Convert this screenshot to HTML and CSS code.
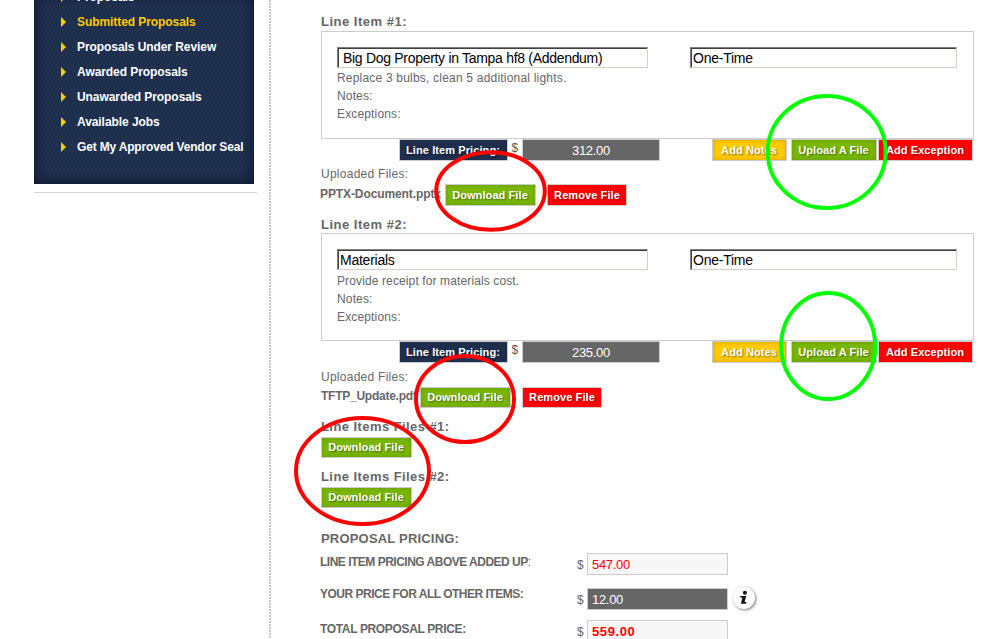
FILE: index.html
```
<!DOCTYPE html>
<html lang="en">
<head>
<meta charset="utf-8">
<title>Submitted Proposals</title>
<link rel="stylesheet" href="styles.css">
</head>
<body>
<div class="page">
  <aside class="side">
    <nav class="menu">
      <ul class="menu-list">
        <li>Proposals</li>
        <li class="active">Submitted Proposals</li>
        <li>Proposals Under Review</li>
        <li>Awarded Proposals</li>
        <li>Unawarded Proposals</li>
        <li>Available Jobs</li>
        <li class="tight">Get My Approved Vendor Seal</li>
      </ul>
    </nav>
    <div class="rule"></div>
  </aside>
  <div class="dots"></div>
  <main class="main">
    <section class="item first">
      <h2>Line Item #1:</h2>
      <div class="card">
        <div class="inputs"><div class="input name pad">Big Dog Property in Tampa hf8 (Addendum)</div><div class="input freq">One-Time</div></div>
        <p class="desc">Replace 3 bulbs, clean 5 additional lights.</p>
        <p>Notes:</p>
        <p>Exceptions:</p>
      </div>
      <div class="actions">
        <span class="btn navy">Line Item Pricing:</span><span class="cur">$</span><span class="amount">312.00</span>
        <span class="btn yellow">Add Notes</span><span class="btn green upload">Upload A File</span><span class="btn red exception">Add Exception</span>
      </div>
      <p class="uploaded">Uploaded Files:</p>
      <div class="file"><b class="fname doc">PPTX-Document.pptx</b><span class="btn green download">Download File</span><span class="btn red remove">Remove File</span></div>
    </section>
    <section class="item second">
      <h2>Line Item #2:</h2>
      <div class="card">
        <div class="inputs"><div class="input name">Materials</div><div class="input freq">One-Time</div></div>
        <p class="desc2">Provide receipt for materials cost.</p>
        <p>Notes:</p>
        <p>Exceptions:</p>
      </div>
      <div class="actions">
        <span class="btn navy">Line Item Pricing:</span><span class="cur">$</span><span class="amount">235.00</span>
        <span class="btn yellow">Add Notes</span><span class="btn green upload">Upload A File</span><span class="btn red exception">Add Exception</span>
      </div>
      <p class="uploaded">Uploaded Files:</p>
      <div class="file"><b class="fname pdf">TFTP_Update.pdf</b><span class="btn green download">Download File</span><span class="btn red remove">Remove File</span></div>
    </section>
    <section class="files"><h2>Line Items Files #1:</h2><span class="btn green download">Download File</span></section>
    <section class="files"><h2>Line Items Files #2:</h2><span class="btn green download">Download File</span></section>
    <section class="pricing">
      <h2>PROPOSAL PRICING:</h2>
      <div class="prow r1"><div class="label"><b>LINE ITEM PRICING ABOVE ADDED UP</b>:</div><span class="cur2">$</span><div class="field sum">547.00</div></div>
      <div class="prow r2"><div class="label"><b>YOUR PRICE FOR ALL OTHER ITEMS:</b></div><span class="cur2">$</span><div class="field other">12.00</div>
        <svg class="info" width="28" height="28" viewBox="0 0 28 28"><circle cx="14" cy="14" r="11"/><g fill="#11151f"><circle cx="14.9" cy="8.8" r="2"/><path d="M10.4 11.9H16.2L14.6 18.1H16.4L16 19.8H10.9L12.3 13.4H10.1Z"/></g></svg>
      </div>
      <div class="prow r3"><div class="label total"><b>TOTAL PROPOSAL PRICE:</b></div><span class="cur2">$</span><div class="field grand">559.00</div></div>
    </section>
  </main>
</div>
<svg class="marks" width="1008" height="639" viewBox="0 0 1008 639">
  <g stroke="#f00"><ellipse cx="490.5" cy="191" rx="54.3" ry="38.8"/><ellipse cx="465" cy="399" rx="49" ry="43"/><ellipse cx="362.5" cy="471" rx="66.5" ry="53"/></g>
  <g stroke="#0f0"><ellipse cx="826.7" cy="152" rx="59" ry="56"/><ellipse cx="828.2" cy="346" rx="47" ry="53"/></g>
</svg>
</body>
</html>
```
FILE: styles.css
```
* { box-sizing: border-box; }
html { overflow: hidden; }
body { margin: 0; background: #fff; color: #666; font: 12px "Liberation Sans", Arial, sans-serif; }
p, h2, ul { margin: 0; padding: 0; }
.page { display: flex; height: 639px; overflow: hidden; }

/* Sidebar */
.side { width: 223px; margin-left: 34px; flex: none; }
.menu {
  width: 220px; height: 184px; overflow: hidden;
  background: repeating-linear-gradient(135deg, #182744 0 1.1px, #223251 1.1px 2.83px);
  box-shadow: inset 10px 0 10px -6px #10182fb0, inset -10px 0 10px -6px #10182fb0, inset 0 -9px 9px -6px #10182fb0;
}
.menu-list { list-style: none; margin-top: -16px; }
.menu-list li {
  display: flex; align-items: center; gap: 11px; height: 25px; padding-left: 27px;
  color: #fff; font-weight: bold; white-space: nowrap; letter-spacing: -.07px;
}
.menu-list li::before { content: ""; border: solid transparent; border-width: 5px 0 5px 5px; border-left-color: #fc0; }
.menu-list .active { color: #fc0; }
.menu-list .tight { letter-spacing: -.17px; }
.rule { margin-top: 8px; height: 1px; background: #d4d4d4; }
.dots { width: 2px; margin-left: 12px; flex: none; background: repeating-linear-gradient(#c8c8c8 0 2px, #fff 2px 3px); }

/* Line items */
.main { width: 653px; margin-left: 50px; flex: none; }
h2 { height: 17px; font-size: 13px; line-height: 15px; letter-spacing: .5px; white-space: nowrap; }
.item { height: 202px; }
.first { margin-top: 14px; }
.second { margin-top: 1px; }
.second h2 { height: 16px; line-height: 16px; }
.card { height: 108px; border: 1px solid #ccc; padding: 15px 16px 0 15px; }
.inputs { display: flex; justify-content: space-between; margin-bottom: 1px; }
.second .inputs { margin-bottom: 2px; }
.input {
  height: 21px; border: 1px solid #d4d0c8; border-top-color: #808080; border-left-color: #808080;
  box-shadow: inset 1px 1px #404040; color: #000; font-size: 14px; line-height: 21px; padding-left: 2px;
  letter-spacing: -.24px; white-space: nowrap;
}
.name { width: 311px; }
.pad { padding-left: 5px; letter-spacing: -.3px; }
.freq { width: 267px; }
.card p { height: 18px; line-height: 18px; letter-spacing: .15px; }
.card .desc { letter-spacing: .2px; }
.card .desc2 { letter-spacing: .12px; }
.actions { display: flex; height: 22px; padding: 0 1px 0 78px; align-items: flex-start; }
.btn {
  height: 22px; flex: none; display: block; border: 1px solid #ccc; text-align: center; color: #fff;
  font: bold 11px/20px "Liberation Sans", Arial, sans-serif; letter-spacing: .09px;
  text-shadow: 1px 1px 2px #0007; white-space: nowrap; padding-right: 1px;
}
.navy { width: 109px; background: #1f2e4d; }
.yellow { width: 75px; background: #fc0; box-shadow: inset 0 0 5px #d9a000; margin-left: 52px; }
.green { background: #7ab800; box-shadow: inset 0 0 5px #659a00; }
.red { background: #f00; }
.upload { width: 86px; margin-left: 4px; }
.exception { width: 95px; margin-left: 1px; }
.cur { width: 14px; text-align: center; line-height: 18px; color: #555; }
.amount {
  width: 139px; height: 22px; background: #666; border: 1px solid #ccc; color: #fff;
  text-align: center; font-size: 13px; line-height: 21px; letter-spacing: -.35px;
}
.uploaded { height: 22px; line-height: 27px; letter-spacing: .26px; }
.file { display: flex; height: 22px; margin-top: 1px; }
.fname { line-height: 20px; white-space: nowrap; }
.doc { width: 124px; letter-spacing: -.1px; text-indent: -1px; }
.pdf { width: 99px; letter-spacing: -.25px; }
.download { width: 91px; }
.remove { width: 80px; margin-left: 11px; padding-right: 0; }
.second .uploaded { line-height: 29px; }
.second .file { margin-top: 2px; }
.second .fname { line-height: 18px; }

/* Combined files */
.files { height: 50px; }
.second + .files { margin-top: 1px; }
.files h2 { letter-spacing: .43px; line-height: 13px; }
.files .btn, .second .file .btn { height: 21px; line-height: 18px; }

/* Pricing */
.pricing { padding-top: 11px; }
.pricing h2 { letter-spacing: .19px; }
.prow { display: flex; }
.label { width: 257px; margin-left: -1px; letter-spacing: -.5px; line-height: 18px; white-space: nowrap; }
.total { letter-spacing: -.35px; }
.cur2 { width: 10px; line-height: 24px; }
.field {
  width: 141px; height: 22px; border: 1px solid #ccc; background: #f7f7f7; color: #f00;
  padding-left: 4px; font-size: 13px; line-height: 21px; letter-spacing: -.3px;
}
.r1 { height: 35px; margin-top: 5px; }
.r2 { height: 32px; }
.r2 .label { line-height: 12px; }
.other { background: #666; color: #fff; }
.grand { font-weight: bold; letter-spacing: .6px; }
.info { margin: -4px 0 0 2px; fill: #fff; filter: drop-shadow(1px 1px 1.5px #0008); }

/* Highlight rings above the form */
.marks { position: absolute; top: 0; left: 0; fill: none; stroke-width: 4; pointer-events: none; }
```
